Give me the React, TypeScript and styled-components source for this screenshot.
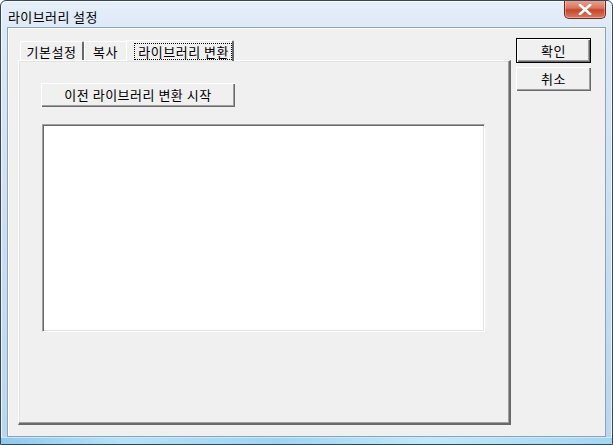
import React from "react";
import styled, { createGlobalStyle } from "styled-components";

const Global = createGlobalStyle`
  html, body { margin: 0; padding: 0; background: #ffffff; }
  body { font-family: "Noto Sans CJK KR", "Noto Sans", sans-serif; }
  * { box-sizing: border-box; }
`;

const FONT = `"Noto Sans CJK KR", "Noto Sans", sans-serif`;

const Window = styled.div`
  width: 613px;
  height: 445px;
  display: flex;
  flex-direction: column;
  border: 1px solid #34475e;
  border-radius: 6px 6px 0 0;
  background: linear-gradient(180deg, #e6eff9 0%, #dbe8f5 8%, #c8ddf1 60%, #b9d6ef 100%);
  padding: 0 6px 0 6px;
  box-shadow: inset 0 0 0 1px rgba(255, 255, 255, 0.75);
  overflow: hidden;
`;

const TitleBar = styled.div`
  height: 26px;
  display: flex;
  align-items: flex-start;
  justify-content: space-between;
  padding-left: 1px;
`;

const Title = styled.span`
  font-size: 13px;
  line-height: 13px;
  margin-top: 9px;
  color: #000;
  letter-spacing: 0.4px;
`;

const CloseButton = styled.div`
  width: 42px;
  height: 19px;
  margin-top: -1px;
  border: 1px solid #6b2a22;
  border-top: none;
  border-radius: 0 0 5px 5px;
  background: linear-gradient(180deg, #eba895 0%, #d9735d 45%, #c4452d 55%, #d97a60 100%);
  display: flex;
  align-items: center;
  justify-content: center;
  box-shadow: inset 0 0 0 1px rgba(255, 255, 255, 0.35);
`;

const Client = styled.div`
  flex: 1;
  background: #f0f0f0;
  border: 1px solid #8aa3bd;
  box-shadow: inset 1px 1px 0 #ffffff;
  display: flex;
  padding: 10px 0 0 10px;
`;

const BottomEdge = styled.div`
  height: 7px;
  margin: 0 -6px;
  background: linear-gradient(90deg, #8fc9ea 0%, #b6e2f6 20%, #9fd4ef 45%, #c2e8f8 70%, #a4d6f0 100%);
  border-top: 1px solid #c9e9f8;
`;

const TabColumn = styled.div`
  display: flex;
  flex-direction: column;
  width: 493px;
  padding-top: 1px;
`;

const TabStrip = styled.div`
  display: flex;
  align-items: flex-end;
  height: 21px;
  padding-left: 2px;
  position: relative;
  z-index: 1;
`;

const Tab = styled.div<{ $active?: boolean; $w: number; $hideRight?: boolean }>`
  width: ${(p) => p.$w}px;
  height: ${(p) => (p.$active ? 21 : 19)}px;
  font-size: 13px;
  letter-spacing: 0.5px;
  color: #000;
  display: flex;
  align-items: center;
  justify-content: ${(p) => (p.$active ? "flex-end" : "center")};
  padding-right: ${(p) => (p.$active ? 0 : 1)}px;
  border-top: 1px solid #ffffff;
  border-left: 1px solid #ffffff;
  border-right: 2px solid ${(p) => (p.$hideRight ? "transparent" : "#696969")};
  border-radius: 2px 2px 0 0;
  background: #f0f0f0;
  margin-bottom: ${(p) => (p.$active ? -1 : 0)}px;
  ${(p) => (p.$active ? "margin-left: -2px;" : "")}
`;

const TabLabel = styled.span<{ $focus?: boolean }>`
  padding: 0 2px 0 3px;
  height: 17px;
  line-height: 15px;
  border: 1px dotted ${(p) => (p.$focus ? "#000" : "transparent")};
`;

const Panel = styled.div`
  height: 365px;
  border-top: 1px solid #ffffff;
  border-left: 1px solid #ffffff;
  border-right: 2px solid #696969;
  border-bottom: 2px solid #696969;
  box-shadow: inset -1px -1px 0 #a0a0a0, inset 1px 1px 0 #e3e3e3;
  padding: 22px 0 0 22px;
  display: flex;
  flex-direction: column;
`;

const ClassicButton = styled.button<{ $w: number; $default?: boolean }>`
  width: ${(p) => p.$w}px;
  height: ${(p) => (p.$default ? 25 : 24)}px;
  font-family: ${FONT};
  font-size: 13px;
  letter-spacing: 0.5px;
  color: #000;
  background: #f0f0f0;
  padding: 0;
  border: ${(p) => (p.$default ? "1px solid #000" : "none")};
  box-shadow: inset 1px 1px 0 #ffffff, inset -1px -1px 0 #696969,
    inset -2px -2px 0 #a0a0a0;
  display: flex;
  align-items: center;
  justify-content: center;
  line-height: 14px;
`;

const ListBox = styled.div`
  margin-top: 17px;
  margin-left: 1px;
  width: 443px;
  height: 208px;
  background: #ffffff;
  border-top: 1px solid #a0a0a0;
  border-left: 1px solid #a0a0a0;
  border-right: 1px solid #ffffff;
  border-bottom: 1px solid #ffffff;
  box-shadow: inset 1px 1px 0 #696969, inset -1px -1px 0 #e3e3e3;
`;

const SideButtons = styled.div`
  display: flex;
  flex-direction: column;
  gap: 4px;
  margin-left: 5px;
`;

export default function App() {
  return (
    <>
      <Global />
      <Window>
        <TitleBar>
          <Title>라이브러리 설정</Title>
          <CloseButton>
            <svg width="14" height="11" viewBox="0 0 14 11">
              <path
                d="M2 1 L12 10 M12 1 L2 10"
                stroke="#ffffff"
                strokeWidth="2.6"
                strokeLinecap="square"
              />
            </svg>
          </CloseButton>
        </TitleBar>
        <Client>
          <TabColumn>
            <TabStrip>
              <Tab $w={64}>
                <TabLabel>기본설정</TabLabel>
              </Tab>
              <Tab $w={44} $hideRight>
                <TabLabel>복사</TabLabel>
              </Tab>
              <Tab $w={108} $active>
                <TabLabel $focus>라이브러리 변환</TabLabel>
              </Tab>
            </TabStrip>
            <Panel>
              <ClassicButton $w={194}>이전 라이브러리 변환 시작</ClassicButton>
              <ListBox />
            </Panel>
          </TabColumn>
          <SideButtons>
            <ClassicButton $w={75} $default>
              확인
            </ClassicButton>
            <ClassicButton $w={75}>취소</ClassicButton>
          </SideButtons>
        </Client>
        <BottomEdge />
      </Window>
    </>
  );
}
